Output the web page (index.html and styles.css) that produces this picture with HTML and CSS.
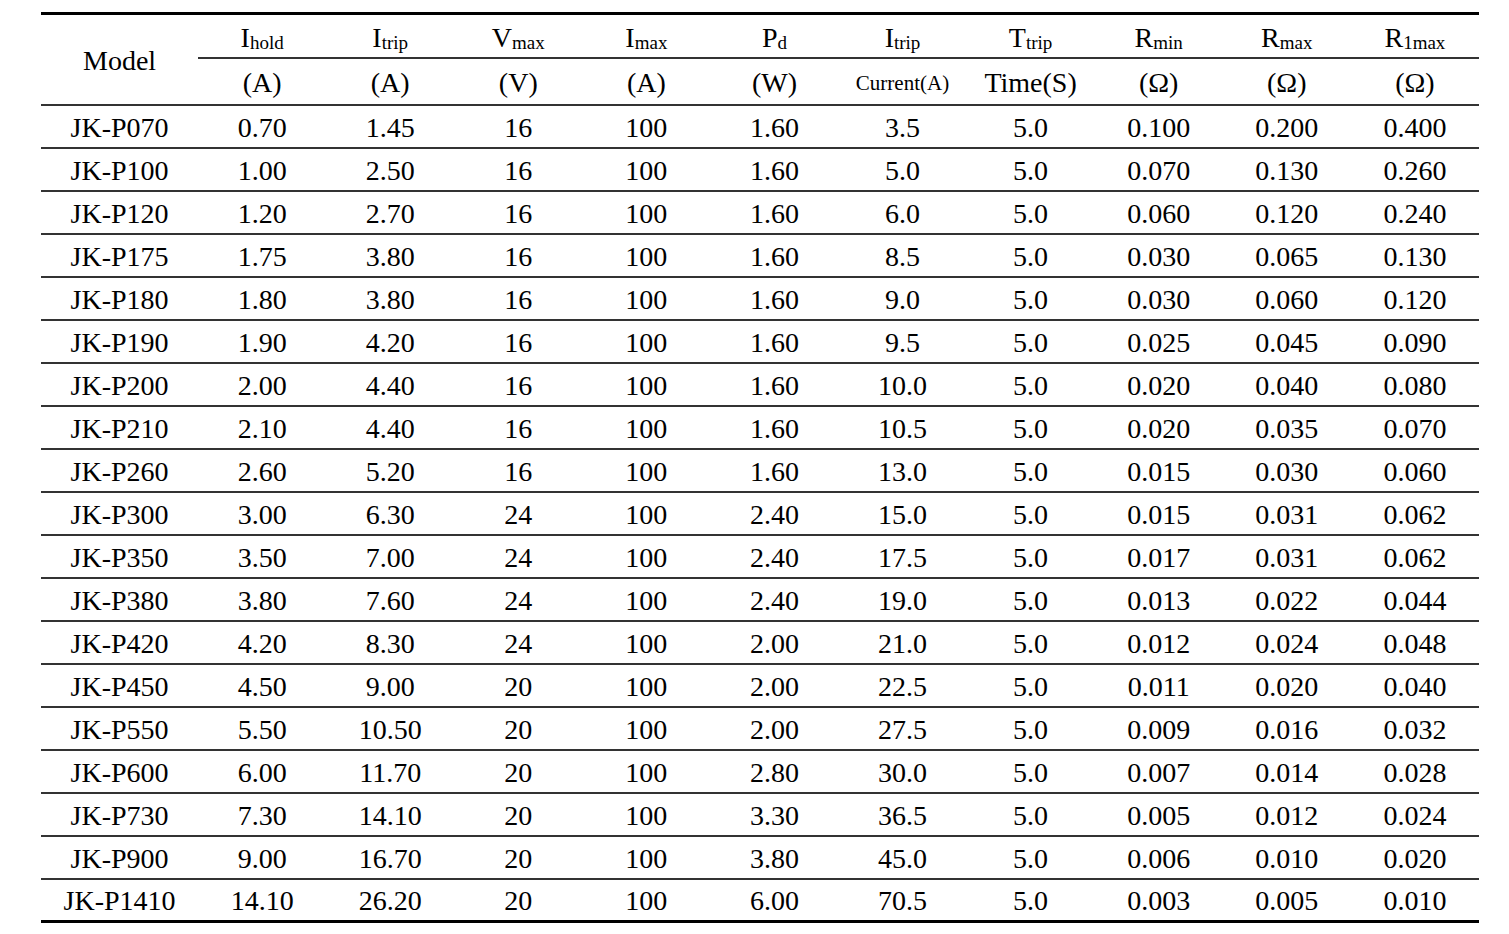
FILE: index.html
```html
<!DOCTYPE html>
<html>
<head>
<meta charset="utf-8">
<title>PPTC Specifications</title>
<link rel="stylesheet" href="styles.css">
</head>
<body>
<table class="spec">
  <colgroup>
    <col class="c-model">
    <col class="c-val"><col class="c-val"><col class="c-val"><col class="c-val"><col class="c-val">
    <col class="c-val"><col class="c-val"><col class="c-val"><col class="c-val"><col class="c-val">
  </colgroup>
  <thead>
    <tr class="h1">
      <th class="model" rowspan="2">Model</th>
      <th>I<span class="sub">hold</span></th>
      <th>I<span class="sub">trip</span></th>
      <th>V<span class="sub">max</span></th>
      <th>I<span class="sub">max</span></th>
      <th>P<span class="sub">d</span></th>
      <th>I<span class="sub">trip</span></th>
      <th>T<span class="sub">trip</span></th>
      <th>R<span class="sub">min</span></th>
      <th>R<span class="sub">max</span></th>
      <th>R<span class="sub">1max</span></th>
    </tr>
    <tr class="h2">
      <th>(A)</th>
      <th>(A)</th>
      <th>(V)</th>
      <th>(A)</th>
      <th>(W)</th>
      <th class="small">Current(A)</th>
      <th>Time(S)</th>
      <th>(Ω)</th>
      <th>(Ω)</th>
      <th>(Ω)</th>
    </tr>
  </thead>
  <tbody>
    <tr><td>JK-P070</td><td>0.70</td><td>1.45</td><td>16</td><td>100</td><td>1.60</td><td>3.5</td><td>5.0</td><td>0.100</td><td>0.200</td><td>0.400</td></tr>
    <tr><td>JK-P100</td><td>1.00</td><td>2.50</td><td>16</td><td>100</td><td>1.60</td><td>5.0</td><td>5.0</td><td>0.070</td><td>0.130</td><td>0.260</td></tr>
    <tr><td>JK-P120</td><td>1.20</td><td>2.70</td><td>16</td><td>100</td><td>1.60</td><td>6.0</td><td>5.0</td><td>0.060</td><td>0.120</td><td>0.240</td></tr>
    <tr><td>JK-P175</td><td>1.75</td><td>3.80</td><td>16</td><td>100</td><td>1.60</td><td>8.5</td><td>5.0</td><td>0.030</td><td>0.065</td><td>0.130</td></tr>
    <tr><td>JK-P180</td><td>1.80</td><td>3.80</td><td>16</td><td>100</td><td>1.60</td><td>9.0</td><td>5.0</td><td>0.030</td><td>0.060</td><td>0.120</td></tr>
    <tr><td>JK-P190</td><td>1.90</td><td>4.20</td><td>16</td><td>100</td><td>1.60</td><td>9.5</td><td>5.0</td><td>0.025</td><td>0.045</td><td>0.090</td></tr>
    <tr><td>JK-P200</td><td>2.00</td><td>4.40</td><td>16</td><td>100</td><td>1.60</td><td>10.0</td><td>5.0</td><td>0.020</td><td>0.040</td><td>0.080</td></tr>
    <tr><td>JK-P210</td><td>2.10</td><td>4.40</td><td>16</td><td>100</td><td>1.60</td><td>10.5</td><td>5.0</td><td>0.020</td><td>0.035</td><td>0.070</td></tr>
    <tr><td>JK-P260</td><td>2.60</td><td>5.20</td><td>16</td><td>100</td><td>1.60</td><td>13.0</td><td>5.0</td><td>0.015</td><td>0.030</td><td>0.060</td></tr>
    <tr><td>JK-P300</td><td>3.00</td><td>6.30</td><td>24</td><td>100</td><td>2.40</td><td>15.0</td><td>5.0</td><td>0.015</td><td>0.031</td><td>0.062</td></tr>
    <tr><td>JK-P350</td><td>3.50</td><td>7.00</td><td>24</td><td>100</td><td>2.40</td><td>17.5</td><td>5.0</td><td>0.017</td><td>0.031</td><td>0.062</td></tr>
    <tr><td>JK-P380</td><td>3.80</td><td>7.60</td><td>24</td><td>100</td><td>2.40</td><td>19.0</td><td>5.0</td><td>0.013</td><td>0.022</td><td>0.044</td></tr>
    <tr><td>JK-P420</td><td>4.20</td><td>8.30</td><td>24</td><td>100</td><td>2.00</td><td>21.0</td><td>5.0</td><td>0.012</td><td>0.024</td><td>0.048</td></tr>
    <tr><td>JK-P450</td><td>4.50</td><td>9.00</td><td>20</td><td>100</td><td>2.00</td><td>22.5</td><td>5.0</td><td>0.011</td><td>0.020</td><td>0.040</td></tr>
    <tr><td>JK-P550</td><td>5.50</td><td>10.50</td><td>20</td><td>100</td><td>2.00</td><td>27.5</td><td>5.0</td><td>0.009</td><td>0.016</td><td>0.032</td></tr>
    <tr><td>JK-P600</td><td>6.00</td><td>11.70</td><td>20</td><td>100</td><td>2.80</td><td>30.0</td><td>5.0</td><td>0.007</td><td>0.014</td><td>0.028</td></tr>
    <tr><td>JK-P730</td><td>7.30</td><td>14.10</td><td>20</td><td>100</td><td>3.30</td><td>36.5</td><td>5.0</td><td>0.005</td><td>0.012</td><td>0.024</td></tr>
    <tr><td>JK-P900</td><td>9.00</td><td>16.70</td><td>20</td><td>100</td><td>3.80</td><td>45.0</td><td>5.0</td><td>0.006</td><td>0.010</td><td>0.020</td></tr>
    <tr class="last"><td>JK-P1410</td><td>14.10</td><td>26.20</td><td>20</td><td>100</td><td>6.00</td><td>70.5</td><td>5.0</td><td>0.003</td><td>0.005</td><td>0.010</td></tr>
  </tbody>
</table>
</body>
</html>
```
FILE: styles.css
```css
html, body {
  margin: 0;
  background: #ffffff;
}
body {
  padding: 12px 0 0 41px;
  font-family: "Liberation Serif", "Times New Roman", serif;
  color: #000;
}
.spec {
  table-layout: fixed;
  width: 1438px;
  border-collapse: separate;
  border-spacing: 0;
  font-size: 28px;
}
.c-model { width: 157px; }
.c-val { width: 128px; }
.spec th, .spec td {
  box-sizing: border-box;
  padding: 2px 0 0;
  text-align: center;
  vertical-align: middle;
  font-weight: normal;
  white-space: nowrap;
  line-height: 32px;
}
.spec .h1 th {
  height: 47px;
  border-top: 3px solid #000;
  border-bottom: 2px solid #333;
  padding-top: 4px;
}
.spec .h1 th.model {
  border-bottom: 2px solid #333;
  padding-top: 2px;
}
.spec .h2 th {
  height: 47px;
  border-bottom: 2px solid #333;
}
.spec .h2 th.small {
  font-size: 21px;
}
.sub {
  font-size: 19px;
  vertical-align: -2px;
  line-height: 1;
}
.spec td {
  height: 43px;
  border-bottom: 2px solid #333;
}
.spec tr.last td {
  border-bottom: 3px solid #000;
}
```
